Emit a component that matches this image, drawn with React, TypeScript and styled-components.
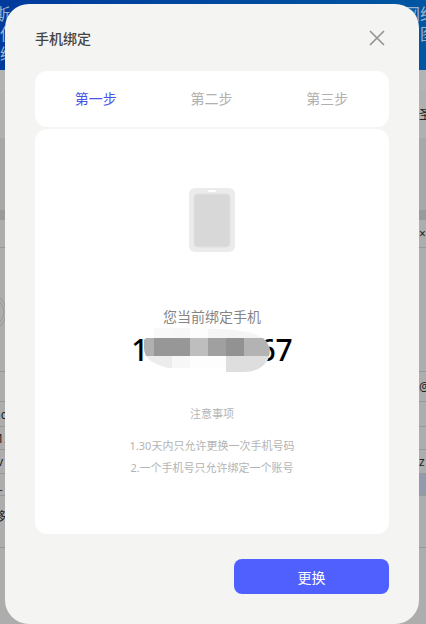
import React from "react";
import styled, { createGlobalStyle } from "styled-components";

const GlobalStyle = createGlobalStyle`
  * { box-sizing: border-box; }
  body {
    margin: 0;
    background: #adadad;
    font-family: "Noto Sans", "Noto Sans CJK SC", sans-serif;
  }
  button { font: inherit; border: 0; padding: 0; cursor: pointer; }
`;

const Page = styled.div`
  position: relative;
  min-height: 100vh;
  overflow: hidden;
  padding: 4px 7px 0 5px;
`;

const Backdrop = styled.div`
  position: absolute;
  inset: 0 -10px 0 -6px;
  overflow: hidden;
  background: #adadad;
  color: #222;
  font-size: 12px;
`;

const Banner = styled.div`
  height: 70px;
  padding: 4px 0;
  background: linear-gradient(90deg, #003a9c, #0057a2);
  color: #9fb2ca;
  font-size: 16px;
  line-height: 20px;
`;

const Line = styled.div<{ $indent?: boolean }>`
  display: flex;
  justify-content: space-between;
  padding-left: ${(p) => (p.$indent ? 6 : 0)}px;
`;

const Strip = styled.div<{ $height: number; $tone?: string; $line?: boolean }>`
  display: flex;
  justify-content: space-between;
  align-items: center;
  height: ${(p) => p.$height}px;
  background: ${(p) => p.$tone ?? "#adadad"};
  border-bottom: ${(p) => (p.$line ? "1px solid #989898" : "0")};
`;

const Rings = styled.svg`
  display: block;
  flex: none;
`;

const Cell = styled.span<{ $tone?: string }>`
  height: 100%;
  min-width: 17px;
  display: flex;
  align-items: center;
  background: ${(p) => p.$tone ?? "transparent"};
`;

const Dialog = styled.section`
  position: relative;
  display: flex;
  flex-direction: column;
  min-height: calc(100vh - 4px);
  padding: 21px 30px 30px;
  border-radius: 24px;
  background: #f4f4f2;
`;

const Header = styled.header`
  display: flex;
  justify-content: space-between;
  align-items: center;
  height: 28px;
  margin-bottom: 18px;
`;

const Title = styled.h1`
  margin: 0;
  font-size: 14px;
  font-weight: 500;
  line-height: 20px;
  color: #444;
`;

const CloseButton = styled.button`
  display: flex;
  width: 24px;
  height: 26px;
  background: none;
`;

const Steps = styled.ol`
  display: grid;
  grid-template-columns: repeat(3, 1fr);
  align-items: center;
  height: 56px;
  margin: 0 0 2px;
  padding: 0 4px 0 3px;
  list-style: none;
  border-radius: 12px;
  background: #fff;
`;

const Step = styled.li<{ $active?: boolean }>`
  text-align: center;
  font-size: 14px;
  line-height: 20px;
  color: ${(p) => (p.$active ? "#4a55e8" : "#b0b0b0")};
`;

const Card = styled.div`
  display: flex;
  flex-direction: column;
  align-items: center;
  flex: 1;
  padding: 59px 20px 55px;
  border-radius: 12px;
  background: #fff;
`;

const Label = styled.p`
  margin: 55px 0 0;
  font-size: 14px;
  line-height: 20px;
  color: #858585;
`;

const PhoneNumber = styled.div`
  display: flex;
  align-items: center;
  height: 46px;
  font-family: "Noto Sans", sans-serif;
  font-size: 30px;
  font-weight: 500;
  line-height: 46px;
  color: #000;
`;

const Mosaic = styled.svg`
  position: relative;
  flex: none;
  margin: 0 -12px 0 -4px;
`;

const NoteTitle = styled.h2`
  margin: 30px 0 10px;
  font-size: 11px;
  font-weight: 400;
  line-height: 22px;
  color: #b4b4b4;
`;

const Note = styled.p`
  margin: 0;
  font-size: 11px;
  line-height: 22px;
  color: #b4b4b4;
`;

const Footer = styled.footer`
  display: flex;
  justify-content: flex-end;
  margin-top: 25px;
`;

const PrimaryButton = styled.button`
  width: 155px;
  height: 35px;
  border-radius: 8px;
  background: #5060ff;
  color: #fff;
  && { font-size: 14px; }
`;

const steps = ["第一步", "第二步", "第三步"];
const notes = ["1.30天内只允许更换一次手机号码", "2.一个手机号只允许绑定一个账号"];

export default function App() {
  return (
    <>
      <GlobalStyle />
      <Page>
        <Backdrop aria-hidden="true">
          <Banner>
            <Line><span>斯</span><span>网络</span></Line>
            <Line $indent><span>使</span><span>图</span></Line>
            <Line $indent><span>绘</span><span /></Line>
          </Banner>
          <Strip $height={20} $tone="#b3b3b3" />
          <Strip $height={48} $tone="#b0b0b0"><span /><Cell>圣</Cell></Strip>
          <Strip $height={72} $tone="#a8a8a8" />
          <Strip $height={10} $tone="#9a9a9a" />
          <Strip $height={28} $line><span /><Cell>×</Cell></Strip>
          <Strip $height={42} />
          <Strip $height={44}>
            <Rings width="14" height="44" viewBox="0 0 14 44" fill="none" stroke="#999">
              <circle cx="-8" cy="22" r="20" />
              <circle cx="-4" cy="22" r="14" />
            </Rings>
          </Strip>
          <Strip $height={38} $line />
          <Strip $height={30} $line><span /><Cell>@</Cell></Strip>
          <Strip $height={25} $line><span>ac</span></Strip>
          <Strip $height={23} $line><span>&nbsp;1.</span></Strip>
          <Strip $height={24} $line><span>&nbsp;v</span><Cell>z</Cell></Strip>
          <Strip $height={22} $line><span>&nbsp;_</span><Cell $tone="#939aab" /></Strip>
          <Strip $height={40}><span>移</span></Strip>
          <Strip $height={12} $line />
        </Backdrop>

        <Dialog role="dialog" aria-labelledby="dialog-title">
          <Header>
            <Title id="dialog-title">手机绑定</Title>
            <CloseButton type="button" aria-label="关闭">
              <svg width="24" height="24" viewBox="0 0 24 24" fill="none" stroke="#929292" strokeWidth="1.6">
                <path d="M5 5 19 19M19 5 5 19" />
              </svg>
            </CloseButton>
          </Header>

          <Steps>
            {steps.map((step, i) => (
              <Step key={step} $active={i === 0} aria-current={i === 0 ? "step" : undefined}>
                {step}
              </Step>
            ))}
          </Steps>

          <Card>
            <svg width="46" height="64" viewBox="0 0 46 64" aria-hidden="true">
              <rect width="46" height="64" rx="6" fill="#ebebeb" />
              <rect x="5" y="6" width="36" height="53" rx="4" fill="#d8d8d8" stroke="#e0e0e0" />
              <rect x="19" y="2" width="8" height="2" rx="1" fill="#fff" />
            </svg>
            <Label>您当前绑定手机</Label>
            <PhoneNumber>
              <span>1</span>
              <Mosaic width="126" height="46" viewBox="0 0 126 46" aria-hidden="true">
                <clipPath id="smudge">
                  <path d="M10 1H46L76 2C96 3 112 6 119 11C126 17 128 25 123 34C119 41 110 45 99 45H82V41H24C9 37 0 32 0 21V13C2 10 6 10 10 10Z" />
                </clipPath>
                <g clipPath="url(#smudge)">
                  <rect width="126" height="46" fill="#fdfdfd" />
                  <rect x="10" y="0" width="18" height="11" fill="#f9f9f9" />
                  <rect x="28" y="0" width="18" height="11" fill="#f7f7f7" />
                  <rect x="64" y="0" width="62" height="11" fill="#f5f5f5" />
                  <rect x="0" y="29" width="28" height="17" fill="#ececec" />
                  <rect x="28" y="29" width="18" height="17" fill="#f7f7f7" />
                  <rect x="82" y="29" width="44" height="17" fill="#dedede" />
                  <rect x="0" y="11" width="10" height="18" fill="#b0b0b0" />
                  <rect x="10" y="11" width="36" height="18" fill="#979797" />
                  <rect x="46" y="11" width="18" height="18" fill="#bebebe" />
                  <rect x="64" y="11" width="18" height="18" fill="#a0a0a0" />
                  <rect x="82" y="11" width="18" height="18" fill="#929292" />
                  <rect x="100" y="11" width="26" height="18" fill="#b3b3b3" />
                </g>
              </Mosaic>
              <span>67</span>
            </PhoneNumber>
            <NoteTitle>注意事项</NoteTitle>
            {notes.map((note) => (
              <Note key={note}>{note}</Note>
            ))}
          </Card>

          <Footer>
            <PrimaryButton type="button">更换</PrimaryButton>
          </Footer>
        </Dialog>
      </Page>
    </>
  );
}
